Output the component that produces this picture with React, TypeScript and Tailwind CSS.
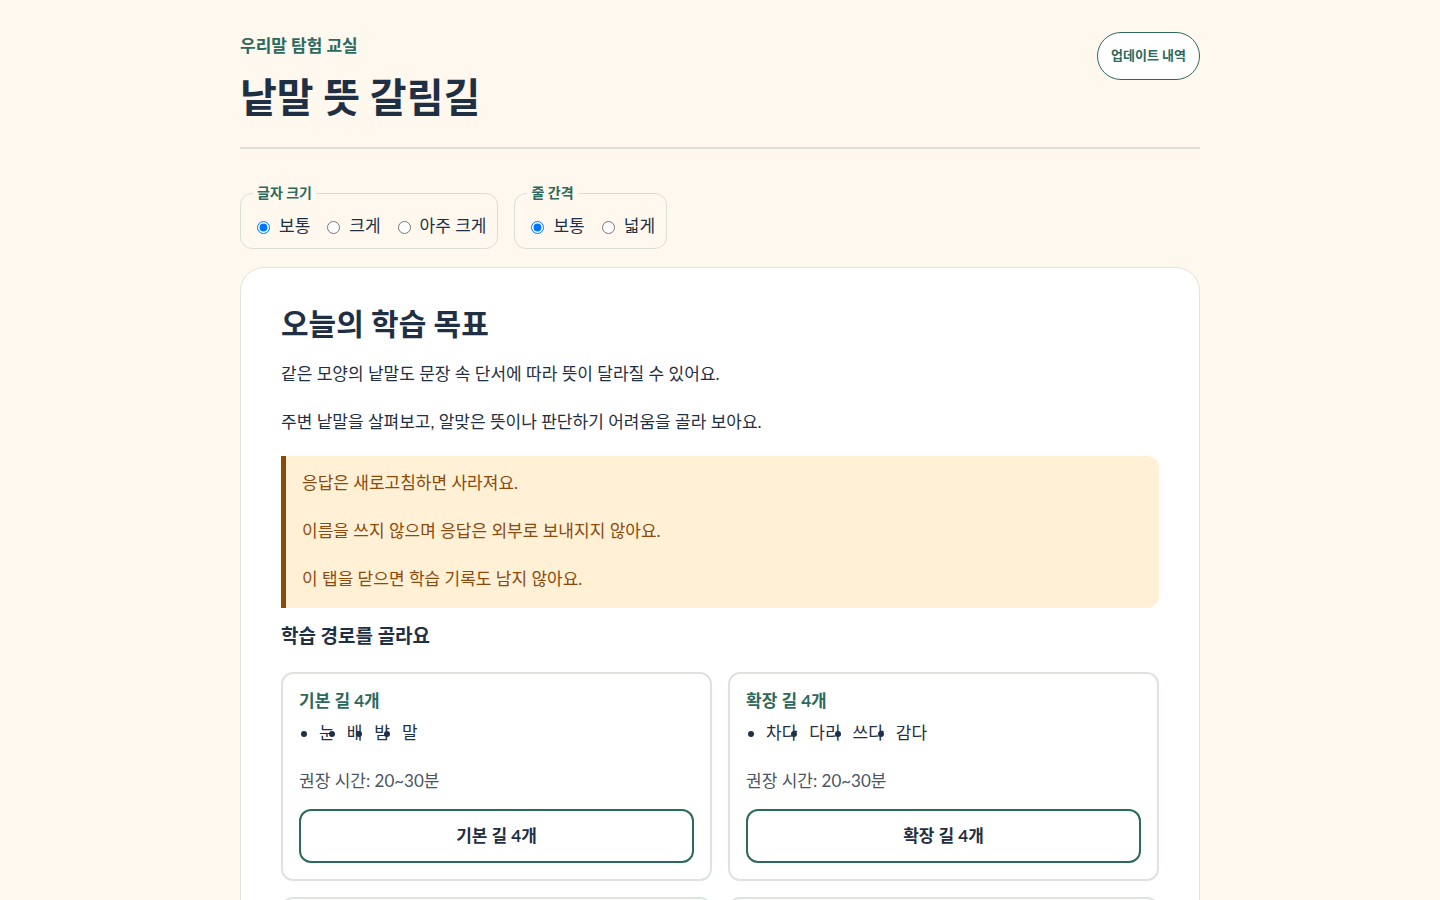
import { useState } from 'react';

const paths = [
  { title: '기본 길 4개', words: ['눈', '배', '밤', '말'], time: '20~30분' },
  { title: '확장 길 4개', words: ['차다', '다리', '쓰다', '감다'], time: '20~30분' },
  { title: '심화 길 4개', words: ['바르다', '묻다', '걸다', '들다'], time: '30~40분' },
  { title: '도전 길 4개', words: ['맞다', '풀다', '타다', '싸다'], time: '30~40분' },
];

function RadioGroup({
  legend,
  name,
  options,
}: {
  legend: string;
  name: string;
  options: string[];
}) {
  const [value, setValue] = useState(options[0]);
  return (
    <fieldset className="rounded-xl border border-[#d7dfd8] pb-[9px] pl-4 pr-[11px] pt-[10px]">
      <legend className="-ml-1 px-1 text-[14px] font-bold leading-[20px] text-[#2d6a5e]">{legend}</legend>
      <div className="flex items-center gap-[17px]">
        {options.map((option) => (
          <label key={option} className="flex items-center gap-[9px] text-[17px] leading-[26px] text-[#1f2f44]">
            <input
              type="radio"
              name={name}
              checked={value === option}
              onChange={() => setValue(option)}
              className="m-0 mt-[3px] h-[13px] w-[13px]"
            />
            {option}
          </label>
        ))}
      </div>
    </fieldset>
  );
}

export default function App() {
  return (
    <div className="min-h-screen bg-[#fef8ee] font-['Lato','Noto_Sans_CJK_KR',sans-serif] text-[#1f2f44]">
      <div className="mx-auto w-[960px] pt-[33px]">
        <header className="flex items-start justify-between border-b-2 border-[#dcdfd8] pb-[24px]">
          <div>
            <p className="text-[17px] font-bold leading-[26px] text-[#2d6a5e]">우리말 탐험 교실</p>
            <h1 className="mt-[12px] text-[40px] font-bold leading-[52px]">낱말 뜻 갈림길</h1>
          </div>
          <button
            type="button"
            className="-mt-px h-[48px] rounded-full border border-[#2d6a5e] bg-white px-[13px] text-[13px] font-bold text-[#2d6a5e]"
          >
            업데이트 내역
          </button>
        </header>

        <div className="mt-[34px] flex gap-4">
          <RadioGroup legend="글자 크기" name="font-size" options={['보통', '크게', '아주 크게']} />
          <RadioGroup legend="줄 간격" name="line-gap" options={['보통', '넓게']} />
        </div>

        <main className="mt-[18px] rounded-[24px] border border-[#e2e4de] bg-white px-[40px] pb-[40px] pt-[33px]">
          <h2 className="text-[30px] font-bold leading-[44px]">오늘의 학습 목표</h2>
          <p className="mt-[16px] text-[17px] leading-[26px]">
            같은 모양의 낱말도 문장 속 단서에 따라 뜻이 달라질 수 있어요.
          </p>
          <p className="mt-[22px] text-[17px] leading-[26px]">
            주변 낱말을 살펴보고, 알맞은 뜻이나 판단하기 어려움을 골라 보아요.
          </p>

          <div className="mt-[21px] space-y-[22px] rounded-r-xl border-l-[5px] border-[#8b4a0c] bg-[#fff0d6] pb-[16px] pl-[16px] pt-[14px] text-[17px] leading-[26px] text-[#8b4a0c]">
            <p>응답은 새로고침하면 사라져요.</p>
            <p>이름을 쓰지 않으며 응답은 외부로 보내지지 않아요.</p>
            <p>이 탭을 닫으면 학습 기록도 남지 않아요.</p>
          </div>

          <h3 className="mt-[14px] text-[19px] font-bold leading-[28px]">학습 경로를 골라요</h3>

          <div className="mt-[22px] grid grid-cols-2 gap-4">
            {paths.map((path) => (
              <section key={path.title} className="rounded-xl border-2 border-[#dde4dd] px-4 pb-4 pt-[14px]">
                <h4 className="text-[17px] font-bold leading-[26px] text-[#2d6a5e]">{path.title}</h4>
                <ul className="mt-[6px] flex list-disc gap-x-3 pl-5 text-[17px] leading-[26px]">
                  {path.words.map((word) => (
                    <li key={word}>{word}</li>
                  ))}
                </ul>
                <p className="mt-[22px] text-[17px] leading-[26px] text-[#4a5563]">권장 시간: {path.time}</p>
                <button
                  type="button"
                  className="mt-[15px] h-[54px] w-full rounded-xl border-2 border-[#2d6a5e] bg-white text-[17px] font-bold text-[#1f2f44]"
                >
                  {path.title}
                </button>
              </section>
            ))}
          </div>
        </main>
      </div>
    </div>
  );
}
